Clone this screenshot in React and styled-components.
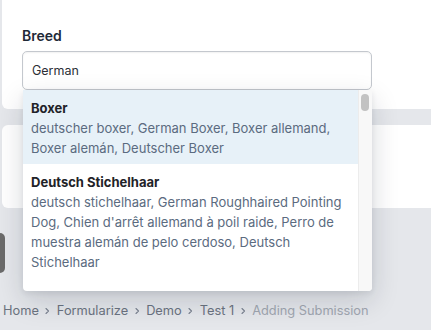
import React from "react";
import styled, { createGlobalStyle } from "styled-components";

const Global = createGlobalStyle`
  html, body { margin: 0; padding: 0; }
  body {
    background: #e5e7eb;
    font-family: Inter, "Noto Sans", sans-serif;
    overflow: hidden;
    width: 431px;
    height: 330px;
  }
  * { box-sizing: border-box; }
`;

const Page = styled.div`
  display: flex;
  flex-direction: column;
  padding-left: 2px;
  width: 431px;
`;

const Card = styled.div`
  background: #ffffff;
  border-radius: ${(p) => (p.$first ? "0 0 0 6px" : "6px 0 0 6px")};
  margin-top: ${(p) => p.$mt || 0}px;
  height: ${(p) => p.$h}px;
  padding: ${(p) => p.$pad || "0"};
`;

const Field = styled.div`
  position: relative;
  width: 350px;
  margin-left: 20px;
  display: flex;
  flex-direction: column;
  gap: 5px;
`;

const Label = styled.label`
  font-size: 14px;
  line-height: 20px;
  font-weight: 600;
  color: #1f2937;
`;

const Input = styled.div`
  height: 39px;
  border: 1px solid #c4c8ce;
  border-radius: 5px;
  box-shadow: inset 0 1px 2px rgba(0, 0, 0, 0.06);
  padding-left: 9px;
  display: flex;
  align-items: center;
  font-size: 12.5px;
  color: #2b2f36;
`;

const Dropdown = styled.div`
  position: absolute;
  top: 64px;
  left: 1px;
  width: 349px;
  height: 201px;
  background: #ffffff;
  border-radius: 0 0 4px 4px;
  box-shadow: 0 10px 28px rgba(15, 23, 42, 0.16), 0 2px 6px rgba(15, 23, 42, 0.08);
  display: flex;
  overflow: hidden;
  z-index: 10;
`;

const List = styled.div`
  flex: 1;
  display: flex;
  flex-direction: column;
`;

const Option = styled.div`
  padding: 8px 8px 6px;
  background: ${(p) => (p.$active ? "#e7f1f8" : "#ffffff")};
`;

const OptTitle = styled.div`
  font-size: 13px;
  line-height: 20px;
  font-weight: 700;
  color: #1f2328;
`;

const OptDesc = styled.div`
  font-size: 13px;
  line-height: 20px;
  color: #5b6b80;
`;

const Track = styled.div`
  width: 14px;
  background: #f8f8f8;
  border-left: 1px solid #ececec;
  padding: 4px 0 0 2px;
`;

const Thumb = styled.div`
  width: 8px;
  height: 17px;
  border-radius: 4px;
  background: #c2c2c2;
`;

const Button = styled.div`
  width: 5px;
  height: 40px;
  margin-left: -2px;
  margin-top: 25px;
  border-radius: 0 5px 5px 0;
  background: #6b6b6b;
`;

const Crumbs = styled.nav`
  display: flex;
  align-items: center;
  gap: 5.5px;
  margin-top: 28px;
  padding-left: 1px;
  font-size: 12.8px;
  line-height: 20px;
`;

const Crumb = styled.span`
  color: ${(p) => (p.$current ? "#a0a6b0" : "#6b7380")};
`;

const Chevron = () => (
  <svg width="7" height="10" viewBox="0 0 7 10" fill="none">
    <path d="M2 2.5 L4.5 5 L2 7.5" stroke="#7b8290" strokeWidth="1.1" strokeLinecap="round" strokeLinejoin="round" />
  </svg>
);

const crumbs = ["Home", "Formularize", "Demo", "Test 1"];

export default function App() {
  return (
    <>
      <Global />
      <Page>
        <Card $first $h={109} $pad="26px 0 0 0">
          <Field>
            <Label>Breed</Label>
            <Input>German</Input>
            <Dropdown>
              <List>
                <Option $active>
                  <OptTitle>Boxer</OptTitle>
                  <OptDesc>deutscher boxer, German Boxer, Boxer allemand, Boxer alemán, Deutscher Boxer</OptDesc>
                </Option>
                <Option>
                  <OptTitle>Deutsch Stichelhaar</OptTitle>
                  <OptDesc>
                    deutsch stichelhaar, German Roughhaired Pointing Dog, Chien d'arrêt allemand à poil raide, Perro de muestra alemán de pelo cerdoso, Deutsch Stichelhaar
                  </OptDesc>
                </Option>
              </List>
              <Track>
                <Thumb />
              </Track>
            </Dropdown>
          </Field>
        </Card>
        <Card $mt={16} $h={83} />
        <Button />
        <Crumbs>
          {crumbs.map((c) => (
            <React.Fragment key={c}>
              <Crumb>{c}</Crumb>
              <Chevron />
            </React.Fragment>
          ))}
          <Crumb $current>Adding Submission</Crumb>
        </Crumbs>
      </Page>
    </>
  );
}
